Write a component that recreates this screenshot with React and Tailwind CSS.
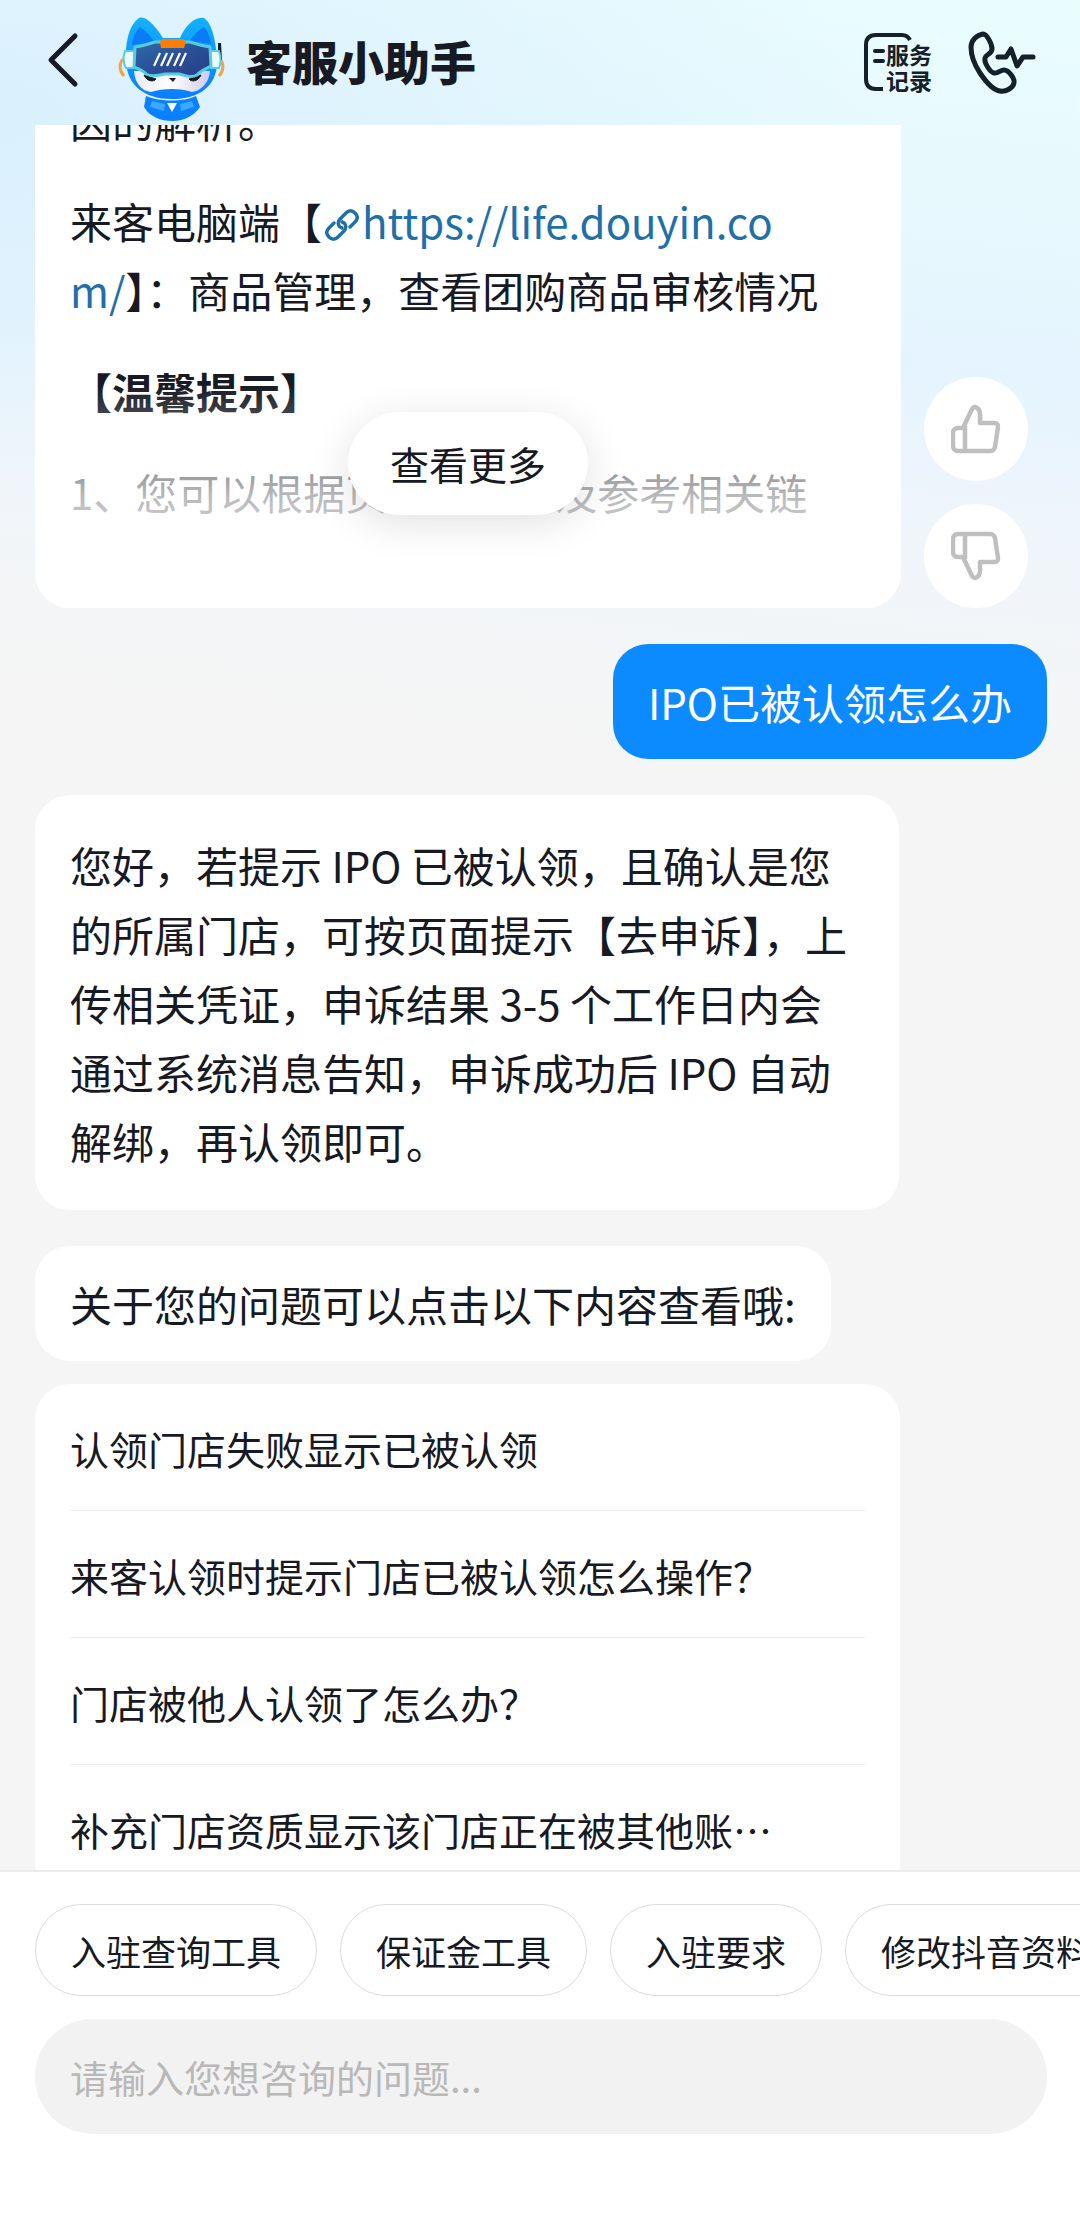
import React from "react";

const questions = [
  "认领门店失败显示已被认领",
  "来客认领时提示门店已被认领怎么操作？",
  "门店被他人认领了怎么办？",
  "补充门店资质显示该门店正在被其他账⋯",
];

const tools = ["入驻查询工具", "保证金工具", "入驻要求", "修改抖音资料"];

function BackIcon() {
  return (
    <svg width="36" height="56" viewBox="0 0 36 56" fill="none" stroke="#171a24" strokeWidth="5" strokeLinecap="round" strokeLinejoin="round">
      <path d="M31 4 7 28l24 24" />
    </svg>
  );
}

function Mascot() {
  return (
    <svg width="108" height="106" viewBox="0 0 108 106" aria-hidden="true" className="shrink-0">
      <defs>
        <linearGradient id="fur" x1="0" y1="0" x2="0" y2="1">
          <stop offset="0" stopColor="#12b2ff" />
          <stop offset="1" stopColor="#0a7dff" />
        </linearGradient>
        <linearGradient id="visor" x1="0" y1="0" x2="1" y2="1">
          <stop offset="0" stopColor="#2f6ea8" />
          <stop offset="0.5" stopColor="#2a4f97" />
          <stop offset="1" stopColor="#263f8a" />
        </linearGradient>
        <linearGradient id="face" x1="0" y1="0" x2="1" y2="0">
          <stop offset="0" stopColor="#e9ecfb" />
          <stop offset="0.5" stopColor="#ffffff" />
          <stop offset="1" stopColor="#cfc9ee" />
        </linearGradient>
      </defs>
      <path d="M5 43c-4 4-4 12 1 17M102 43c4 4 4 12-1 17" fill="none" stroke="#f3a445" strokeWidth="3" />
      <path d="M100 27h3l1 17-4 1z" fill="#14202f" />
      <path d="M28 80c14 6 38 6 50 0l4 11c-7 10-17 14-28 14s-22-4-28-14z" fill="#0a80ff" />
      <path d="M8 45C7 24 12 8 21 2c7-3 17 9 24 20h17C67 10 77 0 86 2c8 5 12 23 13 42 1 26-18 39-45 39S9 70 8 45z" fill="url(#fur)" />
      <path d="M34 85l13 3-1 7-14-4zM74 85l-12 3 1 7 13-4z" fill="#3aa9ff" />
      <path d="M49 87h10l-5 9z" fill="#fff" />
      <path d="M14 29c1-8 4-15 8-18 5 3 11 10 15 15zM93 28c-1-8-4-14-7-17-6 3-11 9-14 14z" fill="#0b7cf8" />
      <path d="M16 55h76c-1 13-10 20-18 21-6-2-12-3-20-3s-15 1-21 3C24 75 17 68 16 55z" fill="url(#face)" />
      <path d="M26 59l12 4c-2 3-9 3-12-4zM83 59l-12 4c2 3 9 3 12-4z" fill="#121c29" stroke="#121c29" strokeWidth="1" />
      <path d="M51 62h7l-3 4z" fill="#14202f" />
      <path d="M7 35h10l-1 17H8c-3-5-3-11-1-17zM92 35h9c2 6 2 12 0 17h-8z" fill="#e9fbff" stroke="#55cdea" strokeWidth="2" />
      <path d="M17 31c8-1 14-3 20-5h35c6 2 12 4 20 5l1 19c-5 3-10 4-14 9-6 3-11 1-14 0l-4-1H47l-5 1c-5 1-10 1-14-1-3-4-8-5-12-7z" fill="url(#visor)" stroke="#56cddd" strokeWidth="3" strokeLinejoin="round" />
      <path d="M44 23h21l3 3-2 6H43l-1-6z" fill="#ff7d05" />
      <path d="M42 37l-6 13M49 37l-6 13M55 37l-6 13M62 37l-6 13M68 37l-6 13" stroke="#fff" strokeWidth="2.2" />
    </svg>
  );
}

function RecordIcon() {
  return (
    <svg width="70" height="64" viewBox="0 0 70 64" fill="none" stroke="#14202a" strokeWidth="4" className="overflow-visible">
      <path d="M46 9c-2-4-5-5-8-5H12C5 4 2 8 2 14v34c0 7 4 10 10 10h7" />
      <path d="M11 20h8M11 30h8" strokeLinecap="round" />
      <text x="22" y="33" fontSize="23" fontWeight="700" fill="#14202a" stroke="none">服务</text>
      <text x="22" y="59" fontSize="23" fontWeight="700" fill="#14202a" stroke="none">记录</text>
    </svg>
  );
}

function PhoneIcon() {
  return (
    <svg width="68" height="64" viewBox="0 0 68 64" fill="none" stroke="#14202a" strokeWidth="5" strokeLinecap="round" strokeLinejoin="round">
      <path d="M15 3c-6 1-12 6-12 13 0 8 3 17 9 26 6 9 13 17 20 18 6 1 13-3 14-8 1-4-5-13-10-13-4 0-6 4-10 3-4-1-10-10-9-15 1-4 7-4 7-9C24 13 19 3 15 3z" />
      <path d="M30 26h8l5-8 6 17 6-9h10" />
    </svg>
  );
}

function ThumbIcon({ down }) {
  return (
    <svg width="50" height="50" viewBox="0 0 50 50" fill="none" stroke="#bfbfbf" strokeWidth="4.5" strokeLinejoin="round" className={down ? "-scale-y-100" : ""}>
      <path d="M14 24H9c-3 0-5 2-5 5v13c0 3 2 5 5 5h32c3 0 4-1 5-4l3-20c0-3-1-4-4-4H31V10c0-4-2-6-5-7-2 0-2 1-3 2z" transform="translate(-2 0)" />
      <path d="M14 22v24" />
    </svg>
  );
}

function LinkIcon() {
  return (
    <svg width="34" height="34" viewBox="0 0 34 34" fill="none" stroke="#1f6fa8" strokeWidth="3.4" strokeLinecap="round" className="mx-[3px] inline-block align-[-3px]">
      <path d="M17 20c-4-1-5-6-2-9l6-6c3-3 6-3 9 0s3 6 0 9l-5 5" />
      <path d="M17 14c4 1 5 6 2 9l-6 6c-3 3-6 3-9 0s-3-6 0-9l5-5" />
    </svg>
  );
}

export default function App() {
  return (
    <div className="flex h-screen flex-col overflow-hidden bg-[#f5f5f5] bg-[radial-gradient(ellipse_900px_400px_at_0px_110px,#daf0fd_0%,#daf0fd00_100%),linear-gradient(186deg,#eafdfd_0px,#e8fafd_130px,#e5f4fe_380px,#f0f5fb_550px,#f5f5f5_780px)] font-['Noto_Sans_CJK_SC',sans-serif] text-[42px] leading-[69px] text-[#171923]">
      <header className="flex h-[125px] shrink-0 items-center px-[44px]">
        <button aria-label="返回" className="mb-[6px]"><BackIcon /></button>
        <div className="mt-[12px] ml-[38px]"><Mascot /></div>
        <h1 className="mb-[4px] ml-[20px] flex-1 text-[46px] font-black">客服小助手</h1>
        <button aria-label="服务记录"><RecordIcon /></button>
        <button aria-label="电话客服" className="ml-[34px]"><PhoneIcon /></button>
      </header>

      <main className="flex min-h-0 flex-1 flex-col overflow-hidden pr-[33px] pl-[35px]">
        <div className="flex shrink-0 items-end gap-[23px]">
          <section className="relative h-[483px] w-[866px] overflow-hidden rounded-b-[35px] bg-white">
            <div className="flex h-full flex-col justify-end gap-[32px] pr-[78px] pb-[82px] pl-[35px] break-all">
              <p>因的解析。</p>
              <p>
                来客电脑端【<a href="https://life.douyin.com/" className="text-[#1f6fa8]"><LinkIcon />https://life.douyin.com/</a>】：商品管理，查看团购商品审核情况
              </p>
              <p className="font-bold">【温馨提示】</p>
              <p className="whitespace-nowrap">1、您可以根据页面提示以及参考相关链</p>
            </div>
            <div className="absolute inset-x-0 bottom-0 h-[223px] bg-linear-to-b from-white/0 via-white/70 to-white" />
            <button className="absolute bottom-[93px] left-[313px] h-[103px] rounded-full bg-white px-[42px] text-[39px] shadow-[0_8px_40px_rgba(0,0,0,0.12)]">查看更多</button>
          </section>
          <div className="flex flex-col gap-[23px]">
            <button aria-label="有帮助" className="flex size-[104px] items-center justify-center rounded-full bg-white"><ThumbIcon /></button>
            <button aria-label="没帮助" className="flex size-[104px] items-center justify-center rounded-full bg-white"><ThumbIcon down /></button>
          </div>
        </div>

        <p className="mt-[36px] shrink-0 self-end rounded-[35px] bg-[#0b8bff] px-[35px] py-[23px] text-white">IPO已被认领怎么办</p>

        <p className="mt-[36px] w-[864px] shrink-0 rounded-[35px] bg-white py-[35px] pr-[40px] pl-[35px]">
          您好，若提示 IPO 已被认领，且确认是您的所属门店，可按页面提示【去申诉】，上传相关凭证，申诉结果 3-5 个工作日内会通过系统消息告知，申诉成功后 IPO 自动解绑，再认领即可。
        </p>

        <p className="mt-[36px] shrink-0 self-start rounded-[35px] bg-white px-[35px] py-[23px]">关于您的问题可以点击以下内容查看哦:</p>

        <ul className="mt-[23px] w-[865px] shrink-0 rounded-[35px] bg-white px-[35px] pb-[40px] text-[39px] leading-[54px]">
          {questions.map((q) => (
            <li key={q} className="border-b border-[#ececec] last:border-0">
              <button className="block w-full truncate pt-[37px] pb-[35px] text-left">{q}</button>
            </li>
          ))}
        </ul>
      </main>

      <footer className="shrink-0 border-t-2 border-[#ececec] bg-white pt-[32px] pb-[79px]">
        <nav className="flex gap-[23px] overflow-hidden pl-[35px]">
          {tools.map((t) => (
            <button key={t} className="h-[92px] shrink-0 rounded-full border border-[#dcdcdc] px-[35px] text-[35px]">{t}</button>
          ))}
        </nav>
        <div className="mt-[23px] pr-[33px] pl-[35px]">
          <input aria-label="咨询问题" placeholder="请输入您想咨询的问题..." className="h-[115px] w-full rounded-full bg-[#f2f2f2] px-[35px] text-[38px] outline-none placeholder:text-[#b8b8b8]" />
        </div>
      </footer>
    </div>
  );
}
